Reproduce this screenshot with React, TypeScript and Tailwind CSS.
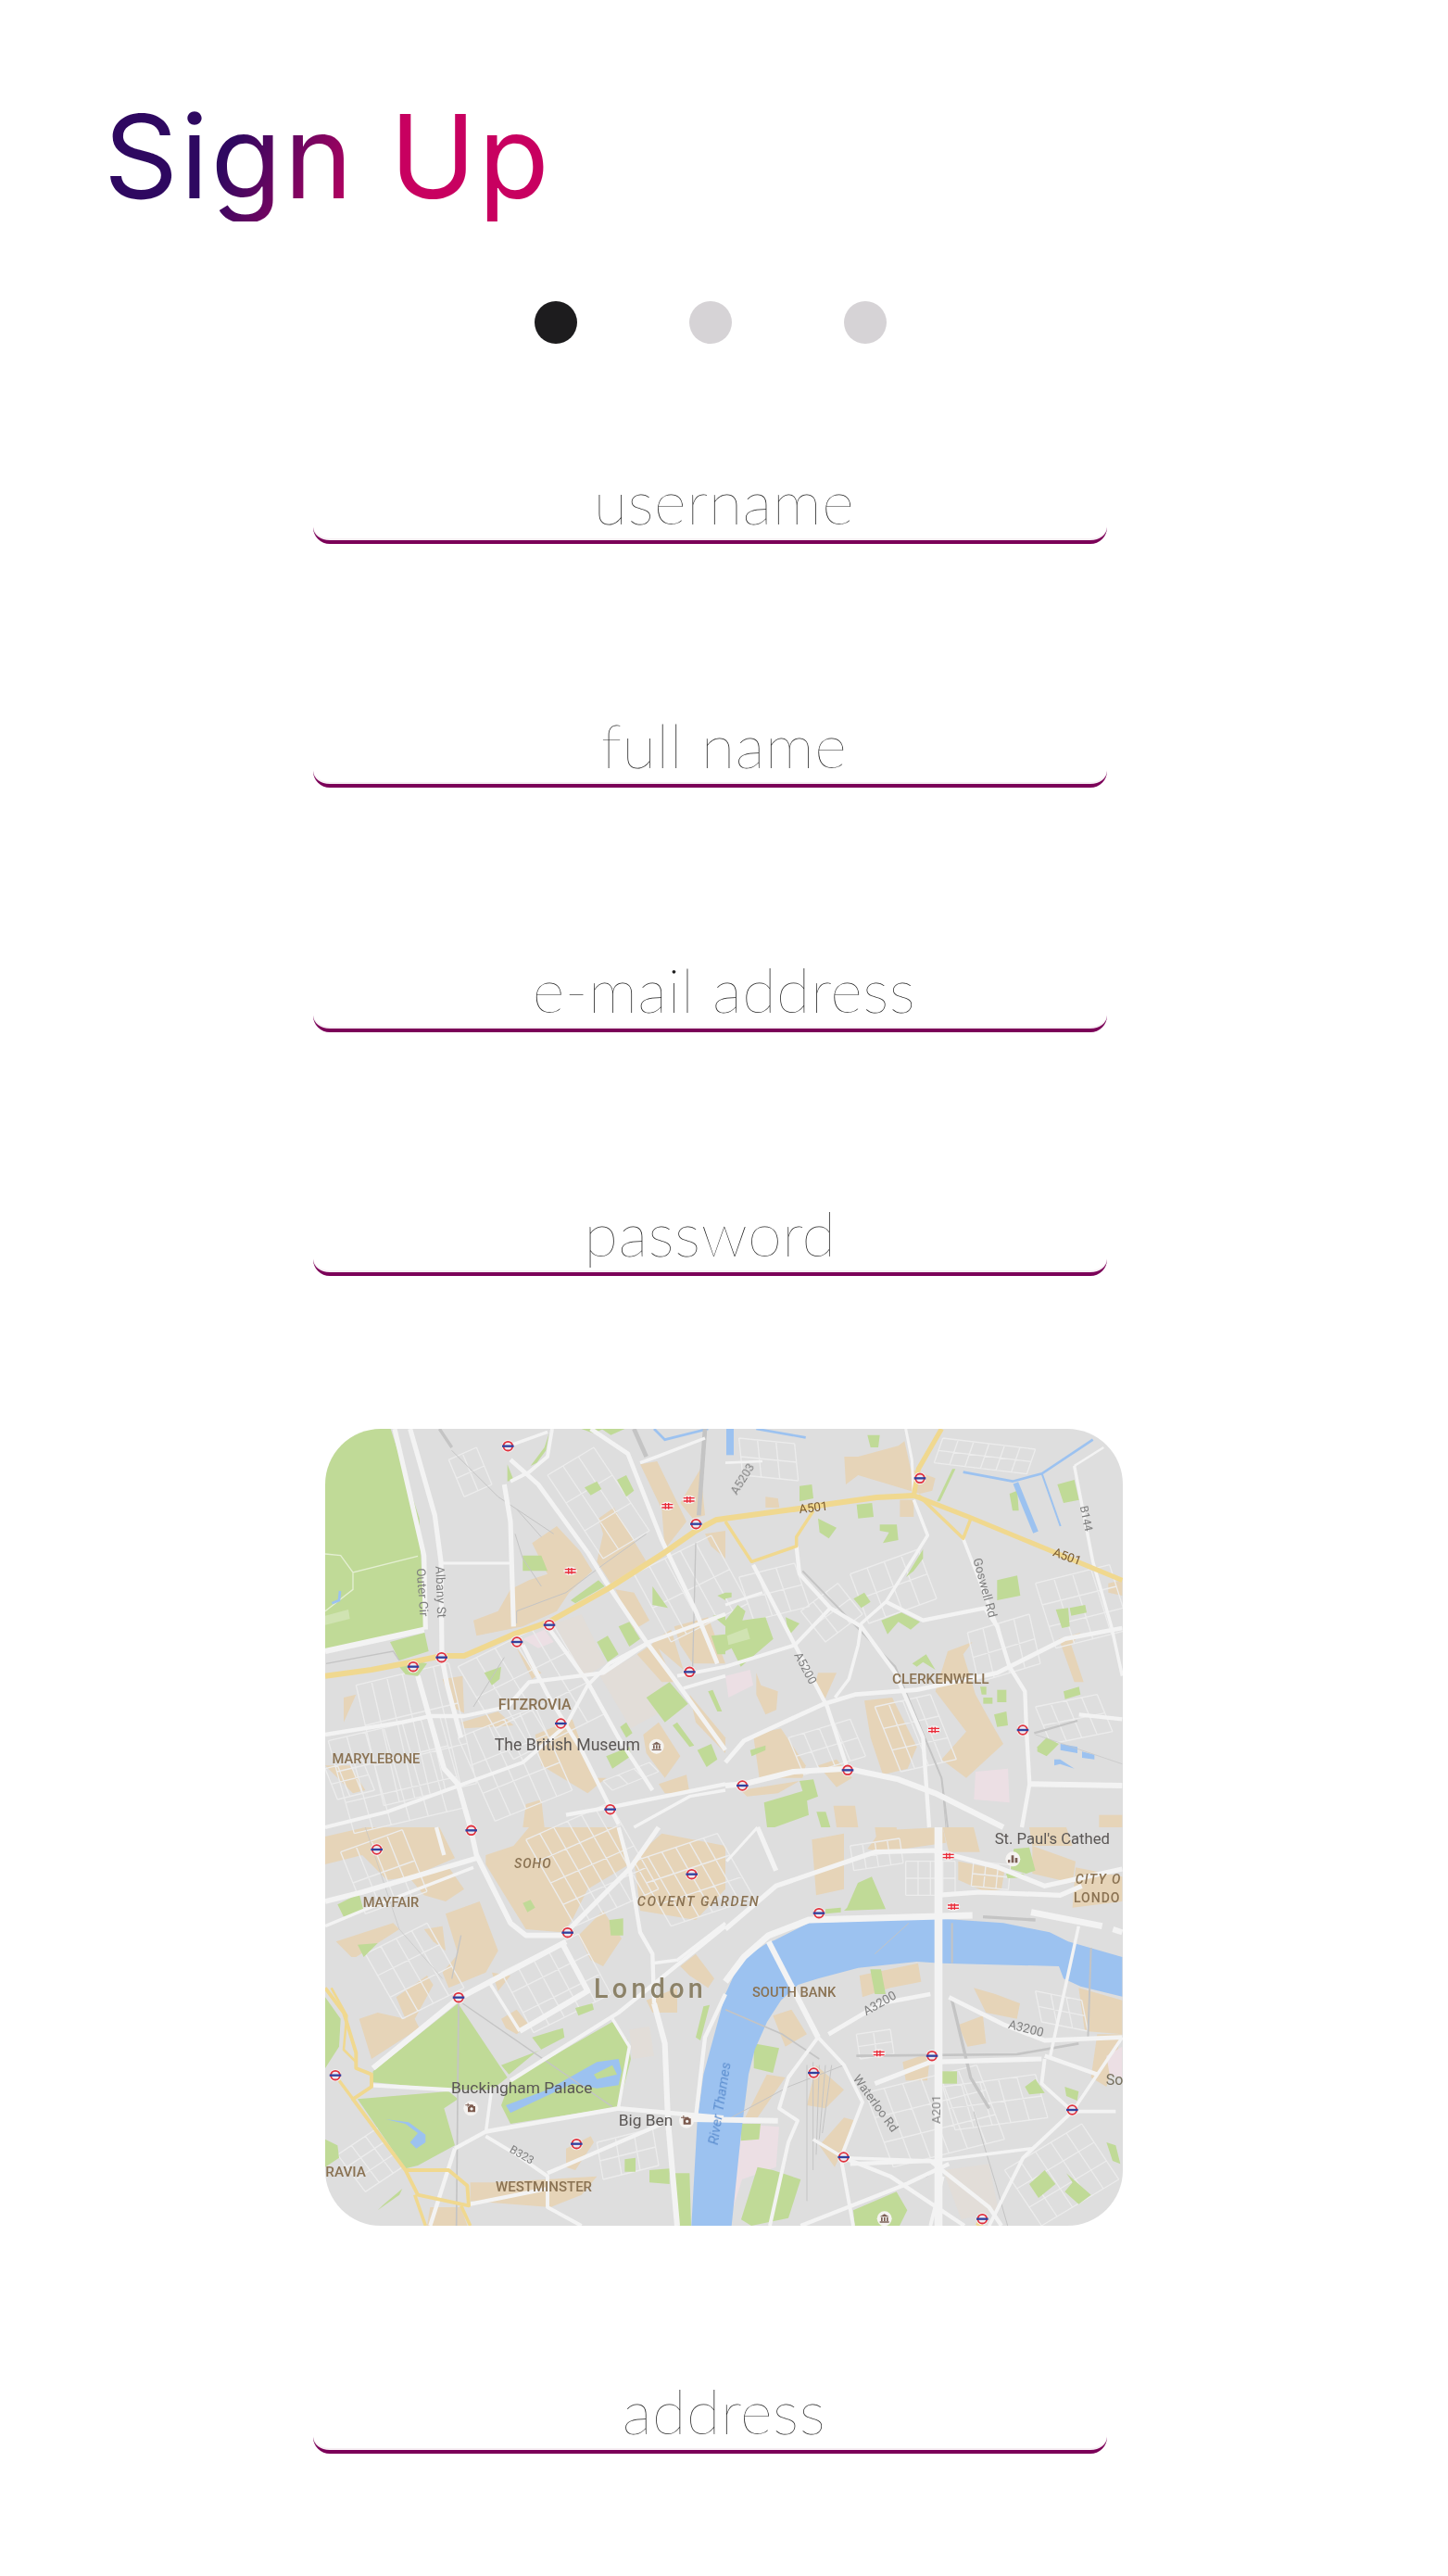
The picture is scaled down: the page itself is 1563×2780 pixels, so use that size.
const GREEN = [
  '0,0 212,0 305,290 310,410 322,645 0,720', '210,690 322,660 335,720 240,750', '240,770 285,750 330,760 300,800 260,795',
  '880,690 915,670 950,730 915,755', '950,640 985,625 1020,680 985,705', '1040,870 1115,820 1175,890 1100,950', '795,555 885,490 905,510 810,565',
  '1240,850 1255,845 1285,915 1270,915', '955,965 975,950 995,985 975,1000', '1125,960 1140,950 1195,1025 1180,1030', '910,1060 985,1030 990,1060 930,1100',
  '1205,1040 1250,1020 1270,1070 1235,1095', '1060,510 1110,580 1060,570', '1250,670 1296,665 1296,730 1270,730', '840,190 880,170 895,195 860,215',
  '945,165 975,150 1000,200 975,220', '640,410 700,410 720,460 640,460', '515,790 570,770 565,810 540,830', '590,115 610,165 590,170',
  '665,120 710,60 725,15 715,70 685,110', '830,0 870,15 900,0', '895,0 925,20 970,0', '1255,605 1296,600 1296,640', '1270,540 1296,530 1296,555',
  '430,1860 590,2100 540,2140 410,2140 150,2115 155,2080', '105,2170 400,2145 430,2170 385,2200 420,2320 300,2385 260,2395',
  '570,2190 600,2110 930,1920 980,1980 990,2040 950,2195 600,2250', '570,2060 700,2010 670,1970 770,1940 775,1970 680,2020 595,2090',
  '0,1840 50,1910 45,2000 0,2070', '0,2300 40,2320 45,2360 0,2390', '40,1540 110,1505 125,1560 60,1580', '105,1670 170,1665 125,1710',
  '640,1535 665,1525 680,1550 655,1565', '920,1590 965,1585 965,1640 925,1640', '810,1875 865,1860 870,1880 820,1900', '1200,1970 1225,1870 1245,1865 1215,1980',
  '1130,2410 1180,2410 1185,2580 1145,2580', '970,2365 1005,2360 1005,2405 970,2405', '1050,2400 1115,2395 1115,2445 1050,2440', '240,2480 170,2530 190,2510 250,2460',
  '1536,185 1576,180 1581,225 1536,235', '1721,245 1771,240 1776,285 1726,290', '1796,310 1851,310 1856,360 1806,370 1826,335 1796,330',
  '1596,290 1656,320 1631,355 1601,335', '1756,20 1796,20 1791,60 1766,60', '2371,180 2426,165 2441,230 2391,240', '2216,210 2241,200 2246,265 2226,265',
  '2176,490 2241,475 2251,540 2176,555', '1881,480 1936,390 1936,420 1906,460', '1711,550 1746,530 1766,560 1736,580', '2366,585 2406,580 2411,640 2386,645',
  '2411,580 2461,570 2466,595 2416,605', '1801,620 1866,595 1926,625 1896,650 1856,625 1821,665', '1901,760 1946,730 1976,780 1936,755 1916,770',
  '2391,850 2441,835 2446,860 2396,875', '2176,845 2206,845 2206,885 2176,885', '2131,870 2161,870 2161,890 2131,890', '2121,835 2141,835 2141,860 2126,860',
  '2166,925 2206,915 2211,960 2176,965', '2306,1030 2336,1000 2376,1020 2356,1040 2336,1060 2306,1045', '1376,1040 1426,1025 1426,1040 1381,1060',
  '1536,1140 1581,1135 1596,1190 1556,1205', '1421,1210 1556,1170 1566,1250 1456,1290 1431,1290', '1591,1240 1621,1240 1636,1290 1606,1290',
  '1296,530 1316,530 1316,545 1296,550', '1491,610 1536,630 1501,670', '1296,620 1336,570 1361,590 1351,620 1426,610 1451,680 1346,770 1316,710 1296,720',
  '1981,235 2031,130 2041,130 1991,235', '2230,1360 2280,1355 2300,1430 2270,1440 2220,1425', '2205,1440 2260,1440 2270,1452 2210,1455',
  '1690,1550 1725,1470 1770,1450 1815,1555 1680,1560', '1620,1555 1670,1550 1670,1565 1620,1570', '1388,1990 1470,2005 1450,2085 1388,2070',
  '1346,2250 1410,2250 1405,2300 1346,2305', '1765,1750 1800,1750 1815,1830 1780,1830', '1996,2080 2046,2080 2046,2120 1996,2120', '2266,2130 2300,2105 2330,2150 2280,2155',
  '2395,2130 2440,2145 2435,2175 2400,2160', '2530,2310 2560,2320 2575,2380 2550,2370', '2280,2445 2330,2400 2365,2445 2310,2490', '2395,2470 2420,2440 2400,2410 2480,2480 2440,2510',
  '1347,2560 1400,2390 1450,2400 1540,2430 1500,2555 1380,2580', '1710,2530 1850,2470 1885,2530 1860,2580 1715,2580',
]

const TAN = [
  '520,1380 610,1350 660,1290 950,1290 985,1410 850,1490 800,1590 770,1630 650,1620 600,1540 520,1410', '1000,1390 1090,1310 1296,1350 1296,1490 1200,1590 1020,1560',
  '0,1320 130,1290 370,1290 420,1390 280,1450 200,1460 120,1380 0,1410', '270,1450 400,1420 450,1490 390,1530 320,1510', '320,1620 380,1610 390,1690 350,1660',
  '390,1570 500,1530 560,1690 520,1760 400,1810 380,1760 430,1700', '35,1660 220,1600 240,1620 100,1710 85,1710', '230,1840 330,1770 350,1800 290,1910 305,1940 150,2040 110,1910 170,1890 260,1910',
  '470,2440 550,2440 880,2420 830,2480 730,2520 470,2500', '780,2330 860,2290 870,2310 810,2400 780,2390', '340,2520 440,2520 460,2580 330,2580', '570,1910 620,1880 660,1930 620,1960 585,1940',
  '540,1760 600,1770 560,1820', '1040,1850 1140,1810 1140,1890 1060,1890', '1150,1740 1200,1700 1260,1780 1240,1810 1180,1770', '820,1640 900,1560 960,1650 900,1740 860,1720',
  '480,620 560,590 600,520 660,490 720,470 670,370 750,315 825,395 865,460 790,530 750,590 640,640 490,670', '885,290 935,255 1040,430 925,500 880,430 900,340',
  '1020,115 1075,105 1170,300 1100,390 1090,260', '1150,240 1215,130 1230,280 1190,290', '1230,340 1296,330 1296,420 1250,380', '940,520 1000,530 1050,620 1000,650',
  '1010,730 1070,690 1130,820 1090,820', '1055,690 1120,650 1160,780', '1130,640 1240,610 1296,760 1190,760 1150,700', '680,990 800,940 870,1130 910,1130 850,1180 700,1090',
  '1030,990 1080,950 1150,1060 1100,1130 1040,1050', '380,810 445,800 450,920 410,900', '440,950 560,915 610,960 450,970', '60,870 100,860 60,950', '0,1090 80,1090 130,1170 90,1180',
  '650,1215 700,1200 710,1290 640,1290', '1080,1150 1170,1120 1180,1180 1100,1180', '620,710 660,760 700,790 670,810', '1180,860 1296,1000 1296,1050 1200,950',
  '1681,90 1726,90 1856,55 1876,40 1896,130 1976,160 1966,200 1926,210 1726,150 1686,180', '1861,230 1906,230 1906,285 1861,285', '1426,220 1466,225 1471,255 1426,255',
  '1396,790 1411,830 1466,850 1461,910 1426,925 1396,860', '1596,790 1656,790 1616,880 1586,830', '1746,880 1836,870 1916,1030 1886,1100 1806,1120 1766,1000',
  '1976,850 2016,720 2096,690 2066,730 2106,860 2156,950 2196,1020 2076,1130 1996,1070 2076,980', '2376,680 2446,660 2416,700 2456,820 2426,820',
  '1386,990 1476,970 1556,1090 1546,1130 1406,1130', '1596,1090 1656,1070 1706,1130 1656,1160', '1346,1170 1536,1140 1466,1180 1366,1190', '1646,1220 1716,1220 1726,1290 1656,1290',
  '2536,500 2581,490 2581,540 2536,530', '2506,1250 2581,1250 2581,1290 2506,1290', '1756,1360 1800,1300 2000,1290 2010,1340 1800,1370', '1576,1330 1680,1310 1680,1490 1590,1510',
  '1780,1290 1850,1290 1860,1360 1790,1360', '2000,1290 2100,1290 2120,1370 2020,1370', '2050,1400 2200,1430 2190,1490 2140,1500 2050,1460', '2290,1350 2430,1400 2420,1470 2290,1440',
  '2430,1420 2581,1450 2581,1530 2420,1550', '1730,1770 1920,1730 1930,1790 1830,1810 1740,1840', '2100,1810 2170,1830 2250,1860 2240,1910 2140,1890', '2440,1810 2581,1850 2581,1960 2460,1950',
  '1430,2090 1490,2100 1400,2230 1360,2230', '1590,2060 1680,2140 1620,2200 1560,2190', '2050,1930 2130,1900 2140,1990 2080,2000', '1870,2050 1960,2020 1950,2110 1880,2110',
  '1600,2320 1680,2230 1720,2240 1650,2390', '1450,1900 1510,1880 1560,1960 1490,2000', '2500,1960 2581,1960 2530,2130 2480,2100', '2280,1290 2400,1290 2420,1350 2290,1350',
]

const BEIGE = ['745,630 830,600 910,760 830,810', '890,800 1010,730 1100,830 1040,870 1080,920 990,970', '985,1945 1050,1935 1065,2030 995,2040', '2000,2400 2150,2380 2180,2530 2060,2560']
const LILAC = ['640,680 710,650 740,690 690,710', '1296,800 1376,780 1386,830 1306,870', '2106,1110 2211,1100 2216,1210 2101,1200', '1335,2250 1470,2260 1460,2390 1350,2430 1310,2560', '2530,2030 2581,2000 2581,2100 2540,2090']
const WATER = [
  '1456,1655 1566,1600 1976,1585 2196,1600 2346,1630 2406,1660 2581,1710 2581,1838 2446,1805 2391,1780 2376,1740 1996,1730 1916,1725 1726,1745 1596,1780 1531,1800 1476,1850 1431,1920 1391,2010 1371,2090 1346,2290 1316,2580 1186,2580 1205,2240 1225,2090 1296,1830 1346,1720 1431,1665',
  '585,2190 720,2140 880,2050 950,2040 960,2080 950,2125 880,2135 800,2120 600,2215', '195,2235 270,2245 325,2285 325,2310 295,2330 275,2310 300,2280 260,2250',
  '2381,1020 2436,1030 2436,1050 2381,1040', '2451,1045 2491,1055 2491,1070 2451,1065', '2361,1070 2380,1070 2426,1100 2380,1085 2361,1090',
]

// [stroke width, points]
const ROADS: [number, string][] = [
  [12, '225,0 320,410 325,650'], [12, '275,0 355,280 375,430 378,740 395,830 440,1000'], [13, '300,800 345,960 385,1100 430,1150 470,1290 490,1380 600,1600 650,1640 770,1640'],
  [12, '580,180 600,300 610,640'], [11, '600,100 690,180 850,400 905,490 1040,690 1130,810 1296,1040'], [11, '860,0 980,80 1090,360 1200,590 1270,760'], [8, '1020,110 1075,90 1230,30'],
  [8, '595,55 720,10'], [9, '600,170 660,140 720,90 735,0'], [14, '0,720 320,650'], [7, '375,435 610,435'], [10, '0,990 250,950 340,930 450,930 590,900 660,820 900,790 1050,690 1296,600'],
  [9, '0,1290 200,1240 420,1160 640,1080 780,960 850,830 920,760 1050,690'], [10, '640,700 720,860 830,1040 950,1280'], [10, '720,640 850,820 950,1000 1060,1170'], [10, '780,1250 950,1220 1296,1150'],
  [9, '1140,800 1296,770'], [9, '1160,840 1296,800'], [8, '1000,1290 1180,1190 1296,1170'], [14, '1296,1155 1356,1150 1516,1110 1691,1100 1856,1135 1976,1180 2196,1290'],
  [11, '1296,1080 1356,1010 1616,890 1716,860 1916,845 2176,790 2396,680 2581,645'], [9, '1296,770 1521,700 1636,580'], [10, '1386,440 1516,690 1626,900 1691,1100'],
  [10, '1526,380 1536,470 1636,580 1736,640 1846,790 1936,1000 1956,1290'], [8, '1906,230 1951,345 1816,560 1736,630 1726,700 1696,810 1651,870'],
  [10, '1816,560 1936,620 2136,580 2176,640 2216,770 2266,850 2271,975 2281,1150 2256,1290'], [8, '2066,355 2176,640'], [14, '2281,1150 2581,1155'], [6, '2426,120 2521,60'],
  [8, '2426,120 2486,430 2546,640 2581,800'], [10, '2441,925 2581,940'], [7, '1296,570 1416,530'], [6, '1296,110 1416,105'], [7, '1880,0 1900,100 1906,216'],
  [14, '155,2070 430,1845 780,1660'], [10, '150,2125 410,2140'], [10, '600,2110 950,1890 1296,1610'], [11, '520,2275 950,2200 1290,2230'], [14, '630,1950 850,1820 770,1670'], [8, '630,1950 530,1790'],
  [8, '930,1910 985,2000 950,2195'], [13, '0,1530 120,1500 490,1390'], [8, '0,1610 120,1560 480,1420'], [12, '780,1630 990,1420 1080,1290'], [10, '360,1290 385,1380'],
  [10, '950,1290 985,1420 1020,1630 1060,1700 1065,1860'], [14, '1065,1860 1100,1990 1110,2240 1140,2580'], [10, '420,2330 520,2275'], [10, '420,2330 340,2580'],
  [9, '520,2290 620,2350 720,2420 720,2520 830,2580'], [10, '720,2410 1090,2250'], [10, '470,2510 720,2460'], [8, '540,2130 520,2280'], [8, '1060,1730 1140,1720 1296,1600'],
  [16, '1296,1790 1356,1710 1436,1640 1566,1590 2096,1575'], [16, '2286,1565 2516,1610'], [14, '2551,1620 2581,1630'], [10, '1296,1830 1230,1970 1200,2230'], [14, '1436,1660 1596,1970'],
  [20, '1986,1290 1986,2580'], [14, '1190,2235 1466,2240'], [12, '1400,1290 1460,1430'], [12, '1296,1620 1460,1480 1780,1370 1970,1365 2180,1420 2330,1480 2581,1425'], [12, '1980,1510 2120,1500 2380,1510 2450,1480'],
  [9, '1596,1970 1500,2100 1470,2200 1530,2240 1500,2310 1440,2580'], [9, '1596,1970 1680,2060 1740,2180 1670,2360 1710,2580'], [12, '1780,2120 1960,2050 2320,2040'], [10, '2330,2030 2500,2090'],
  [11, '2020,1840 2200,1930 2330,1980 2581,1970'], [11, '1630,1960 1800,1860 1960,1830'], [8, '1580,2300 1680,2360 1970,2370 2290,2330'], [10, '1700,2380 1960,2370 2150,2520 2190,2580'],
  [10, '1680,2360 1830,2420 2070,2580'], [10, '1540,2580 1870,2450 2020,2380'], [9, '2000,2420 1960,2580'], [9, '2150,2580 2260,2360 2420,2210'], [9, '2330,2040 2320,2120 2420,2210 2560,2210'],
  [8, '2420,2210 2581,1970'], [8, '2346,2040 2440,1610'], [7, '1400,1290 1300,1400'],
]

const YELLOW: [number, string][] = [
  [14, '0,800 150,780 280,755 378,735 450,735 610,665 725,625 920,515 1100,400 1200,330 1265,295 1296,290 1536,258 1640,242 1786,222 1906,216'],
  [12, '1906,216 2096,290 2581,490'], [12, '1906,216 1921,130 1996,0'], [8, '1921,215 2066,355 2091,290'], [8, '1296,300 1381,430 1526,380 1526,350 1581,265'],
  [9, '0,1810 60,1890 100,2020 100,2070 150,2090 150,2130 90,2170 260,2400 400,2400 460,2450 465,2515 300,2480 260,2400'], [6, '20,1810 70,1900 60,2010 100,2050'],
  [8, '45,2110 90,2170'], [8, '290,2480 325,2580'], [8, '440,2515 470,2580'], [12, '2110,2570 2130,2580'],
]

const CANALS: [number, string][] = [
  [8, '1065,0 1100,35 1240,0'], [24, '1311,0 1311,85'], [8, '1396,0 1556,28'], [8, '2066,140 2226,170 2321,145 2486,35'], [18, '2236,175 2301,335'], [6, '2321,145 2381,315'],
]

const RAILS: [number, string][] = [
  [10, '370,0 410,60'], [3, '410,70 560,220 620,260 740,340'], [3, '620,260 700,350'], [3, '615,340 640,420 700,510'], [14, '1230,0 1210,280'], [3, '1040,340 900,440 780,530 620,590 620,630'],
  [14, '1000,0 1040,90'], [6, '1546,460 1846,770 1996,1130 2016,1290'], [3, '1996,1130 2010,1290'], [7, '2296,985 2436,945'], [2, '2300,990 2581,1085'], [4, '3,760 220,720 240,750'],
  [4, '1200,370 1190,770'], [3, '580,740 480,900'], [5, '432,1860 425,2580'], [4, '445,1860 930,2195'], [2, '130,1290 240,1620 380,1780'], [4, '440,1640 410,1780'],
  [6, '2030,1600 2030,1730'], [10, '2030,1850 2090,2100 2150,2200'], [8, '1720,2030 2240,2025 2440,1990'], [5, '1296,1880 1480,1960 1600,2040'], [3, '1296,2240 1500,2130 1680,2060'],
  [3, '1560,2060 1560,2500'], [3, '1580,2050 1580,2400'], [3, '1600,2060 1590,2350'], [3, '1620,2060 1600,2300'], [3, '1640,2060 1610,2280'], [6, '2480,1680 2470,1980'], [3, '2100,2210 2170,2440 2210,2580'],
  [3, '1880,2440 1950,2420 1990,2390'], [3, '1780,1700 1890,1600'], [10, '2130,1580 2300,1590'],
]

const UNDERGROUND = [
  [592, 56], [1201, 308], [726, 635], [621, 690], [377, 740], [285, 770], [1180, 787], [763, 954], [923, 1232], [167, 1362], [473, 1300], [1187, 1442], [785, 1631], [432, 1841], [33, 2093], [814, 2315],
  [1926, 160], [1692, 1105], [1351, 1155], [2259, 975], [1599, 1568], [1965, 2030], [1582, 2085], [1679, 2358], [2419, 2205], [2128, 2558],
]
const RAIL_STOPS = [[1108, 250], [1178, 229], [794, 460], [1971, 975], [2018, 1383], [2034, 1547], [1793, 2022]]

type Label = { t: string; x: number; y: number; s: number; c: string; r?: number; i?: boolean; ls?: number; end?: boolean; w?: number }

const BROWN = '#8a7252'
const DARK = '#5a5654'
const GRAY = '#7f7f7f'
const LABELS: Label[] = [
  { t: 'FITZROVIA', x: 560, y: 910, s: 48, c: BROWN, w: 500 }, { t: 'The British Museum', x: 548, y: 1042, s: 53, c: DARK }, { t: 'MARYLEBONE', x: 307, y: 1082, s: 44, c: BROWN, end: true, w: 500 },
  { t: 'Albany St', x: 358, y: 445, s: 40, c: GRAY, r: 88 }, { t: 'Outer Cir', x: 296, y: 452, s: 40, c: GRAY, r: 86 }, { t: 'SOHO', x: 612, y: 1422, s: 42, c: BROWN, i: true, ls: 3, w: 500 },
  { t: 'MAYFAIR', x: 122, y: 1548, s: 44, c: BROWN, w: 500 }, { t: 'COVENT GARDEN', x: 1010, y: 1545, s: 43, c: BROWN, i: true, ls: 5, w: 500 }, { t: 'London', x: 870, y: 1843, s: 86, c: '#8c8268', ls: 13, w: 500 },
  { t: 'Buckingham Palace', x: 408, y: 2150, s: 52, c: DARK }, { t: 'Big Ben', x: 950, y: 2257, s: 52, c: DARK }, { t: 'RAVIA', x: 132, y: 2422, s: 46, c: BROWN, end: true, w: 500 },
  { t: 'WESTMINSTER', x: 552, y: 2468, s: 45, c: BROWN, w: 500 }, { t: 'B323', x: 595, y: 2340, s: 36, c: GRAY, r: 30 }, { t: 'River Thames', x: 1272, y: 2320, s: 46, c: '#5d8fd0', r: -81, i: true },
  { t: 'SOUTH BANK', x: 1383, y: 1838, s: 44, c: BROWN, w: 500 }, { t: 'A3200', x: 1752, y: 1900, s: 40, c: GRAY, r: -30 }, { t: 'A3200', x: 2210, y: 1940, s: 40, c: GRAY, r: 14 },
  { t: 'Waterloo Rd', x: 1708, y: 2104, s: 40, c: GRAY, r: 54 }, { t: 'A201', x: 1992, y: 2250, s: 40, c: GRAY, r: -90 }, { t: "St. Paul's Cathed", x: 2168, y: 1345, s: 50, c: DARK },
  { t: 'CITY O', x: 2429, y: 1472, s: 42, c: BROWN, i: true, ls: 4, w: 500 }, { t: 'LONDO', x: 2424, y: 1533, s: 42, c: BROWN, ls: 3, w: 500 }, { t: 'So', x: 2528, y: 2125, s: 48, c: '#77705f' },
  { t: 'A5203', x: 1332, y: 215, s: 38, c: GRAY, r: -58 }, { t: 'A501', x: 1536, y: 274, s: 40, c: '#7a5a30', r: -7 }, { t: 'A501', x: 2354, y: 410, s: 40, c: '#7a5a30', r: 20 },
  { t: 'B144', x: 2444, y: 252, s: 36, c: GRAY, r: 78 }, { t: 'Goswell Rd', x: 2098, y: 422, s: 40, c: GRAY, r: 75 }, { t: 'A5200', x: 1518, y: 732, s: 38, c: GRAY, r: 62 },
  { t: 'CLERKENWELL', x: 1836, y: 825, s: 46, c: BROWN, w: 500 },
]

// street blocks: n+1 lines along (vx,vy)*m, and m+1 lines along (ux,uy)*n
function grid(ox: number, oy: number, ux: number, uy: number, n: number, vx: number, vy: number, m: number) {
  let d = ''
  for (let i = 0; i <= n; i++) d += `M${ox + ux * i},${oy + uy * i}l${vx * m},${vy * m}`
  for (let j = 0; j <= m; j++) d += `M${ox + vx * j},${oy + vy * j}l${ux * n},${uy * n}`
  return d
}

const STREETS = [
  grid(100, 830, 50, -12, 6, 30, 130, 3), grid(10, 1010, 60, -14, 6, 28, 100, 3), grid(430, 770, 60, -30, 5, 60, 100, 3), grid(720, 150, 50, -30, 3, 60, 90, 3), grid(1000, 470, 50, -25, 5, 60, 110, 2),
  grid(430, 1000, 50, -20, 5, 40, 90, 3), grid(50, 1370, 50, -18, 4, 40, 100, 2), grid(650, 1330, 45, -20, 6, 40, 70, 4), grid(1000, 1400, 45, -15, 6, 40, 70, 3), grid(130, 1700, 50, -25, 4, 40, 70, 3),
  grid(570, 1760, 50, -25, 5, 35, 65, 3), grid(880, 2310, 60, -15, 3, 10, 60, 2), grid(40, 2350, 45, -30, 3, 30, 40, 3), grid(1750, 2150, 60, -15, 6, 30, 80, 3), grid(2200, 2400, 50, -30, 5, 40, 60, 3),
  grid(2000, 2130, 60, -8, 5, 20, 70, 2), grid(1720, 1960, 55, -8, 2, 6, 40, 2), grid(1340, 480, 60, -15, 3, 24, 70, 2), grid(1700, 470, 55, -20, 4, 30, 80, 2), grid(1500, 1000, 50, -15, 4, 25, 60, 2),
  grid(1780, 900, 45, -10, 4, 28, 70, 3), grid(2080, 660, 50, -15, 4, 18, 80, 2), grid(2300, 500, 60, -15, 4, 22, 70, 3), grid(2300, 900, 50, -10, 4, 25, 60, 2), grid(1340, 30, 60, 6, 3, 6, 60, 2),
  grid(2000, 30, 50, 6, 6, -14, 40, 2), grid(1540, 590, 40, -30, 3, 40, 50, 2), grid(1880, 1400, 40, 0, 4, 0, 55, 2), grid(2100, 1400, 40, 4, 3, -4, 40, 2), grid(2300, 1820, 50, 10, 3, 10, 50, 2),
  grid(1700, 1350, 40, -6, 4, 6, 40, 2), grid(400, 100, 45, -20, 2, 25, 60, 2), grid(0, 1100, 40, -10, 3, 20, 50, 2), grid(900, 1140, 50, -20, 3, 30, 30, 1),
]

function Underground({ x, y }: { x: number; y: number }) {
  return (
    <g>
      <circle cx={x} cy={y} r={20} fill="#f4f1f1" />
      <circle cx={x} cy={y} r={14.5} fill="#eceaf2" stroke="#e0303c" strokeWidth={5.5} />
      <rect x={x - 19} y={y - 3.5} width={38} height={7} fill="#33409c" />
    </g>
  )
}

function RailStop({ x, y }: { x: number; y: number }) {
  return (
    <g>
      <ellipse cx={x} cy={y} rx={22} ry={14} fill="#f6efef" />
      <path d={`M${x - 18},${y - 5}h36M${x - 18},${y + 5}h36M${x - 6},${y - 10}v20M${x + 4},${y - 10}v20`} stroke="#ea2a38" strokeWidth={4} fill="none" />
    </g>
  )
}

function Poi({ x, y, kind }: { x: number; y: number; kind: 'museum' | 'camera' | 'chart' }) {
  return (
    <g>
      <circle cx={x} cy={y} r={24} fill="#f5f3f1" />
      {kind === 'museum' && <path d={`M${x - 15},${y - 6}L${x},${y - 15}L${x + 15},${y - 6}ZM${x - 11},${y - 4}h5v12h-5zM${x - 2},${y - 4}h5v12h-5zM${x + 7},${y - 4}h5v12h-5zM${x - 15},${y + 9}h30v4h-30z`} fill="#7b6157" />}
      {kind === 'camera' && <path d={`M${x - 10},${y - 7}h5l3,-5h8l3,5h5v19h-24zM${x + 2},${y - 3}a5,5 0 1,0 .1,0zM${x - 18},${y - 12}h7v-5h3v5h5v3h-5v5h-3v-5h-7z`} fill="#7b5a4e" fillRule="evenodd" />}
      {kind === 'chart' && <path d={`M${x - 16},${y + 12}v-10h7v10zM${x - 5},${y + 12}v-24h8v24zM${x + 7},${y + 12}v-16h8v16z`} fill="#7b6157" />}
    </g>
  )
}

function LondonMap() {
  return (
    <svg viewBox="0 0 2583 2580" className="block h-full w-full">
      <defs>
        <filter id="soft" x="0" y="0" width="100%" height="100%">
          <feGaussianBlur stdDeviation="1.3" />
        </filter>
      </defs>
      <g filter="url(#soft)">
        <rect width="2583" height="2580" fill="#dedede" />
        {BEIGE.map((p) => <polygon key={p} points={p} fill="#e2ddd8" />)}
        {TAN.map((p) => <polygon key={p} points={p} fill="#e6d4b8" />)}
        {LILAC.map((p) => <polygon key={p} points={p} fill="#ecdfe4" />)}
        <path d={STREETS.join('')} stroke="#ececec" strokeWidth={4} fill="none" />
        {GREEN.map((p) => <polygon key={p} points={p} fill="#c0da97" />)}
        <polygon points="0,605 75,585 80,615 0,635" fill="#d0e3b2" />
        <polygon points="1301,670 1366,645 1376,680 1306,700" fill="#d0e3b2" />
        <path d="M0,405 50,410 90,465 300,412M90,465 90,520 0,590" stroke="#e4efd2" strokeWidth={4} fill="none" />
        {WATER.map((p) => <polygon key={p} points={p} fill="#9cc2f0" />)}
        <polygon points="870,2090 930,2060 945,2090 880,2105" fill="#c0da97" />
        {CANALS.map(([w, p]) => <polyline key={p} points={p} stroke="#9cc2f0" strokeWidth={w} fill="none" />)}
        <polyline points="22,565 45,555 48,525" stroke="#9cc2f0" strokeWidth={8} fill="none" />
        {RAILS.map(([w, p]) => <polyline key={p} points={p} stroke="#c4c4c4" strokeWidth={w} fill="none" />)}
        {ROADS.map(([w, p]) => <polyline key={p} points={p} stroke="#f3f3f3" strokeWidth={w * 1.3} fill="none" strokeLinejoin="round" />)}
        {YELLOW.map(([w, p]) => <polyline key={p} points={p} stroke="#f0d88f" strokeWidth={w * 1.3} fill="none" strokeLinejoin="round" />)}
        {UNDERGROUND.map(([x, y]) => <Underground key={`${x}-${y}`} x={x} y={y} />)}
        {RAIL_STOPS.map(([x, y]) => <RailStop key={`${x}-${y}`} x={x} y={y} />)}
        <Poi x={1073} y={1028} kind="museum" />
        <Poi x={472} y={2200} kind="camera" />
        <Poi x={1170} y={2240} kind="camera" />
        <Poi x={2227} y={1393} kind="chart" />
        <Poi x={1811} y={2557} kind="museum" />
        {LABELS.map((l) => (
          <text
            key={l.t + l.x}
            x={l.x}
            y={l.y}
            fontSize={l.s}
            fontWeight={l.w ?? 400}
            fontStyle={l.i ? 'italic' : 'normal'}
            letterSpacing={l.ls ?? 0}
            textAnchor={l.end ? 'end' : 'start'}
            transform={l.r ? `rotate(${l.r} ${l.x} ${l.y})` : undefined}
            fill={l.c}
            fontFamily="Roboto, sans-serif"
          >
            {l.t}
          </text>
        ))}
      </g>
    </svg>
  )
}

function Field({ label, offset = true, className = '' }: { label: string; offset?: boolean; className?: string }) {
  return (
    <div className={`ml-[338px] flex h-[90px] w-[857px] items-end justify-center rounded-b-[18px] border-b-4 border-[#7b0058] shadow-[inset_0_-2px_0_#f6eef3] ${className}`}>
      <span className={`font-['Lato',sans-serif] text-[67px] leading-[86px] font-thin tracking-[0.5px] text-[#1f1f1f] ${offset ? 'pl-[30px]' : ''}`}>
        {label}
      </span>
    </div>
  )
}

export default function App() {
  return (
    <div className="h-[2780px] w-[1563px] overflow-hidden bg-white">
      <div className="pt-[99px] pl-[112px]">
        <h1 className="inline-block bg-[linear-gradient(115deg,#2e0860_30%,#c80060_62%)] bg-clip-text font-['Inter',sans-serif] text-[125px] leading-[140px] font-normal tracking-[2.5px] text-transparent">
          Sign Up
        </h1>
      </div>
      <div className="mt-[86px] ml-[577px] flex gap-[121px]">
        <div className="h-[46px] w-[46px] rounded-full bg-[#1d1c1e]" />
        <div className="h-[46px] w-[46px] rounded-full bg-[#d6d3d6]" />
        <div className="h-[46px] w-[46px] rounded-full bg-[#d6d3d6]" />
      </div>
      <Field label="username" className="mt-[126px]" />
      <Field label="full name" className="mt-[173px]" />
      <Field label="e-mail address" className="mt-[174px]" />
      <Field label="password" offset={false} className="mt-[173px]" />
      <div className="mt-[165px] ml-[351px] h-[860px] w-[861px] overflow-hidden rounded-[60px]">
        <LondonMap />
      </div>
      <Field label="address" className="mt-[156px]" />
    </div>
  )
}
